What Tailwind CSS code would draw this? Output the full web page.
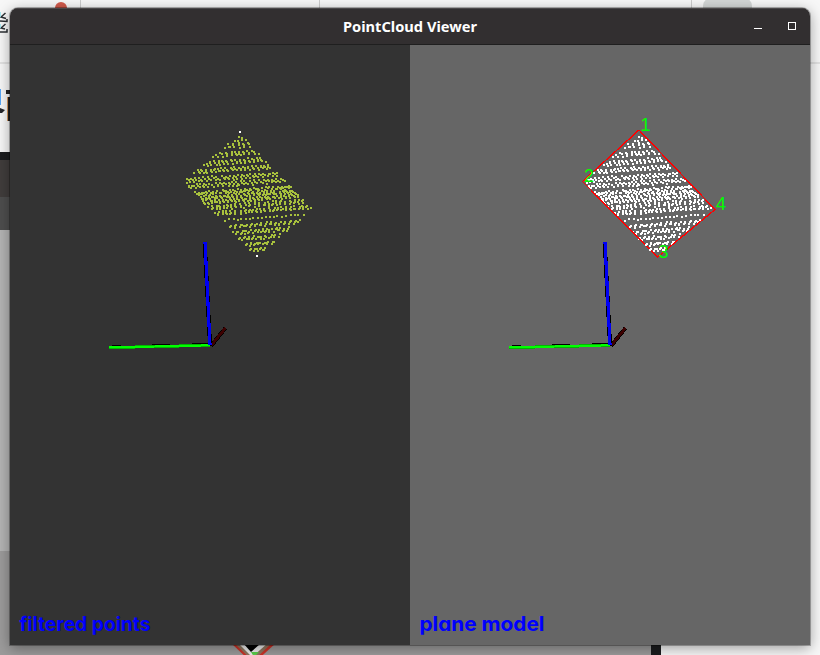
<!DOCTYPE html>
<html lang="en">
<head>
<meta charset="utf-8">
<title>PointCloud Viewer</title>
<script src="https://cdn.jsdelivr.net/npm/@tailwindcss/browser@4"></script>
</head>
<body class="relative h-[655px] w-[820px] overflow-hidden bg-[#f7f7f7] font-['Noto_Sans',sans-serif]">
<!-- desktop behind the window -->
<svg class="absolute inset-0" width="820" height="655" shape-rendering="crispEdges">
  <path d="M80.5 0V10M319.500 0V10M691.500 0V10" stroke="#ccc"/>
  <path d="M0 63H10M810 63H820" stroke="#e2e2e2" stroke-width="2"/>
  <circle cx="61" cy="8" r="6" fill="#d15a4b" shape-rendering="auto"/>
  <rect x="703" y="-2" width="49" height="30" rx="8" fill="#d3d6d5" shape-rendering="auto"/>
  <g fill="none" stroke="#2b2f33" stroke-width="1.500" shape-rendering="auto">
    <path d="M5.500 13L1 17L6 18.500M0 21L7 21.500V19M5.500 24L1 28L5 29M0 32H7V29"/>
    <path d="M0 12V17M0 24V28" stroke="#8fe6f2"/>
  </g>
  <rect x="0" y="89" width="1" height="16" fill="#58a6f5"/>
  <path d="M0 108L5 110L2 113H0Z" fill="#24262b" shape-rendering="auto"/>
  <rect x="6" y="90" width="5" height="4" fill="#222"/>
  <rect x="7" y="97" width="1" height="24" fill="#d79a62"/><rect x="8" y="97" width="3" height="24" fill="#222"/>
  <rect x="0" y="152" width="661" height="503" fill="#1b1c1e"/>
  <rect x="0" y="160" width="651" height="37" fill="#413d3c"/>
  <rect x="0" y="197" width="651" height="33" fill="#4e4e4e"/>
  <rect x="0" y="230" width="651" height="321" fill="#b4b4b4"/>
  <rect x="0" y="551" width="651" height="104" fill="#9c9b9b"/>
  <g shape-rendering="auto">
    <path d="M231 643L253 664L276 643Z" fill="#cc3328"/>
    <path d="M234 643L253 661L272 643Z" fill="#8f765f"/>
    <path d="M238 643L252 657L268 643Z" fill="#eee"/>
    <path d="M243 643L251 652L260 644Z" fill="#000"/>
    <path d="M251 652h8l-5 5z" fill="#5bd04b"/>
  </g>
</svg>
<div class="absolute left-[10px] top-[8px] h-[637px] w-[800px] rounded-t-lg shadow-[0_0_0_1px_rgba(0,0,0,0.28),0_3px_14px_rgba(0,0,0,0.38)]">
  <div class="flex h-full flex-col overflow-hidden rounded-t-lg">
    <header class="h-[37px] border-b border-[#1f1f1f] border-t border-t-[#4b4849] bg-[#322f30]">
      <svg class="h-full w-full" viewBox="0 0 800 35" shape-rendering="crispEdges">
        <text x="333" y="22.500" textLength="134" lengthAdjust="spacingAndGlyphs" font-size="13.500" font-weight="700" fill="#fff">PointCloud Viewer</text>
        <rect x="744" y="19" width="8" height="1" fill="#fff"/>
        <rect x="778.500" y="13.500" width="7" height="7" fill="none" stroke="#fff"/>
      </svg>
    </header>
    <section class="flex flex-1">
      <div class="w-[400px] bg-[#333]">
        <svg width="400" height="600" viewBox="10 45 400 600" shape-rendering="crispEdges">
          <path class="cloud" fill="#a8c13d"/>
          <rect x="239" y="131" width="2" height="2" fill="#fff"/><rect x="256" y="255" width="2" height="2" fill="#fff"/>
          <g id="axes">
            <path d="M112 346H121M152 345H170M192 344H208" stroke="#000" stroke-width="2"/>
            <path d="M109 347.600L210 345.300" stroke="#00b800" stroke-width="3"/>
            <path d="M109 347.500L210 345.300" stroke="#00ff00" stroke-width="2"/>
            <path d="M211 346L225.500 328" stroke="#000" stroke-width="4"/>
            <path d="M211.500 345L225.500 328" stroke="#3d0000" stroke-width="2.800"/>
            <path d="M203.500 242V258M206.500 242V257M204.500 262V278M205.500 282V297M206.500 300V317M207.500 320V336M207.500 257V275M208.500 276V296M209.500 296V315M210.500 315V333M211.500 334V342" stroke="#000"/>
            <path d="M205 242L210 345" stroke="#0000f5" stroke-width="3.200"/>
          </g>
          <text x="19.500" y="631" textLength="131" lengthAdjust="spacingAndGlyphs" font-size="19.800" font-weight="700" fill="#0000ff" font-family="Inter, sans-serif">filtered points</text>
        </svg>
      </div>
      <div class="w-[400px] bg-[#666]">
        <svg width="400" height="600" viewBox="10 45 400 600" shape-rendering="crispEdges">
          <path class="cloud" fill="#fff"/>
          <path d="M239 130L182.500 181.500L257.500 257L315 209.500Z" fill="none" stroke="#ff0000" stroke-width="1.300"/>
          <g fill="#00ff00" font-size="18" font-family="Liberation Sans, sans-serif">
            <text x="240.500" y="130.500">1</text><text x="184" y="182">2</text><text x="258.500" y="258">3</text><text x="316" y="210">4</text>
          </g>
          <path id="front" fill="#fff"/>
          <use href="#axes"/>
          <text x="19.500" y="631" textLength="125" lengthAdjust="spacingAndGlyphs" font-size="19.800" font-weight="700" fill="#0000ff" font-family="Inter, sans-serif" class="[font-feature-settings:'cv11']">plane model</text>
        </svg>
      </div>
    </section>
  </div>
</div>
<script>
// scan bands: [centre y at x=240, stroke height, spacing, slant]
const bands = [
  [137,1,3.8,0],[140,1,3.8,0],[145,5,4.8,1],[153,5,4.6,1],[161,5,4.3,1],[168.500,4,4.2,1],
  [176.500,4.500,4.4,2],[183,4.500,4.4,2],[190.500,4,4,2],[195,3,3.9,1],[199.500,4,3.9,1],[205.500,5,4.300,0],[211.500,4,4.300,0],
  [219,2,4.200,-1],[225.500,4,4.6,-1],[232,4,4.600,-1],[238.500,4,4.600,-1],[244.500,3,4.600,-1],[250.500,4,4.600,-1]
];
let seed = 11;
const rnd = () => (seed = (seed * 16807) % 2147483647) / 2147483647;
const quad = [[239.500,133],[182.500,181.500],[256.500,257],[312.500,209]];
const inside = (x, y) => quad.every((a, i) => {
  const b = quad[(i + 1) % 4];
  return (b[0]-a[0])*(y-a[1]) - (b[1]-a[1])*(x-a[0]) <= 0;
});
let d = '', front = '';
for (const [cy, h, gap, slant] of bands) {
  for (let x = 184; x < 313; x += gap * (0.8 + rnd() * 0.4)) {
    const y0 = cy - (x - 240) * 0.07 - h / 2;
    const n = h > 2 ? 3 : 1;
    for (let k = 0; k < n; k++) {
      const px = Math.round(x + slant * (k - 1) * 0.9 + (rnd() - 0.5) * 1.5);
      const py = Math.round(y0 + k * h / 3 + (rnd() - 0.5) * 1.3);
      if (!inside(px + 0.5, py + 0.5)) continue;
      const s = `M${px} ${py}h2v2h-2z`;
      d += s;
      if (px < 264 && py > 243) front += s;
    }
  }
}
document.querySelectorAll('.cloud').forEach(p => p.setAttribute('d', d));
document.getElementById('front').setAttribute('d', front);
</script>
</body>
</html>
